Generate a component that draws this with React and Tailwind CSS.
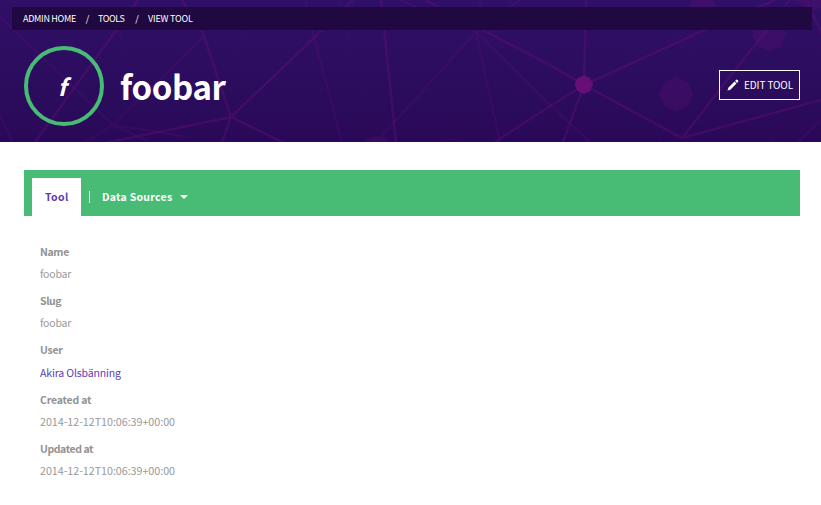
import React from "react";

const strong = [
  "M138 0 35 142", "M182 0 203 33 231 117 222 142", "M353 0 321 31 231 117 105 143", "M231 117 284 143",
  "M381 0 396 142", "M425 0 550 65 584 85 682 138 821 100", "M586 0 584 85 563 142", "M775 0 700 32 584 85",
  "M584 85 550 106 495 142", "M682 138 790 0", "M808 4 822 34",
];
const faint = [
  "M0 17 113 125 203 37", "M150 142 113 125 85 142", "M113 125 190 137", "M0 114 12 142", "M305 0 314 37 342 142",
  "M476 32 380 138", "M476 32 500 142", "M476 32 550 105 590 142", "M480 0 476 32 520 0", "M400 0 476 32",
  "M821 120 798 142",
];
const dim = [
  "M250 20 222 80", "M120 30 126 80", "M338 0 373 135", "M380 142 550 82 700 30", "M821 52 770 142", "M697 30 685 80",
  "M670 110 660 142", "M683 110 688 142", "M440 142 550 118 660 100", "M476 32 540 28",
];

function Network() {
  return (
    <svg className="absolute inset-0 h-[142px] w-full" viewBox="0 0 821 142" preserveAspectRatio="none" fill="none">
      <g stroke="#70107a" strokeWidth="2.6">
        <path opacity=".06" d={dim.join("")} />
        <path opacity=".17" d={faint.join("")} />
        <path opacity=".31" d={strong.join("")} />
      </g>
      <g fill="#70107a">
        <path opacity=".85" d="M584 75.5 590 78 593 84.5 590.5 91 584 94 577.5 91 574.5 84.5 577.5 78z" />
        <g opacity=".22">
          <path d="M676 77 688 82 693 94 688 106 676 111 664 106 659 94 664 82z" />
          <path d="M769 17 781 22 786 34 781 46 769 51 757 46 752 34 757 22z" />
          <path d="M703-7 713-2 717 7H689L693-2z" />
          <path d="M794 0h27v8l-8 2-8-2z" />
          <path d="M366 142 368 138 377 136 386 138 388 142z" />
        </g>
      </g>
    </svg>
  );
}

const fields = [
  ["Name", "foobar", "tracking-[-0.35px]", "tracking-[-0.2px]"],
  ["Slug", "foobar", "tracking-[-0.4px]", "tracking-[-0.2px]"],
  ["User", "Akira Olsbänning", "tracking-[-0.25px]", "tracking-[-0.14px]"],
  ["Created at", "2014-12-12T10:06:39+00:00", "tracking-[-0.2px]", "tracking-[-0.05px]"],
  ["Updated at", "2014-12-12T10:06:39+00:00", "tracking-[-0.42px]", "tracking-[-0.05px]"],
];

export default function App() {
  return (
    <div className="h-[505px] w-full overflow-hidden bg-white font-['Noto_Sans_CJK_SC',sans-serif]">
      <header className="relative h-[142px] bg-linear-to-b from-[#301067] to-[#290957] pt-[7px] text-white">
        <Network />
        <nav className="relative ml-3 flex h-[23px] w-[800px] items-center bg-[#200840] pl-[11px] text-[9px] leading-[23px] whitespace-nowrap">
          <span className="w-[53px] tracking-[-0.3px]">ADMIN HOME</span>
          <span className="w-[22px] pl-px text-center">/</span>
          <span className="w-[28px] tracking-[-0.4px]">TOOLS</span>
          <span className="w-[22px] text-center">/</span>
          <span className="tracking-[-0.2px]">VIEW TOOL</span>
        </nav>
        <div className="relative mt-4 flex h-20 items-center pr-[21px] pl-6">
          <div className="flex size-20 items-center justify-center rounded-full border-4 border-[#48bb74] pr-[4px] text-[23px] leading-none font-bold italic">
            <span>f</span>
          </div>
          <h1 className="ml-4 text-[33px] leading-[40px] font-bold tracking-[-0.4px]">foobar</h1>
          <button className="mt-[-2px] ml-auto flex h-[30px] w-[81px] items-center border border-white pl-[7px] text-[10px] leading-[28px] tracking-[-0.1px] whitespace-nowrap">
            <svg className="mr-[5px] size-3 shrink-0" viewBox="0 0 12 12" fill="white">
              <path d="M.5 11.5 1.3 8.7 7.5 2.5 9.5 4.5 3.3 10.7zM8.1 1.9 9.2.8q.6-.5 1.2.1l.7.7q.5.6 0 1.2L10.1 3.9z" />
            </svg>
            EDIT TOOL
          </button>
        </div>
      </header>
      <main className="pt-7 pr-[21px] pl-6">
        <div className="flex h-[46px] bg-[#48bb74] pt-2 pl-2 text-[10.5px] leading-[37px] font-bold whitespace-nowrap text-white">
          <div className="w-[49px] bg-white pl-[13px] tracking-[0.4px] text-[#5c3cb5]">Tool</div>
          <div className="mt-[13px] ml-2 h-3 w-px bg-white" />
          <div className="ml-3 w-[71px] tracking-[0.28px]">Data Sources</div>
          <div className="mt-[17px] ml-[7px] h-0 border-x-[4.5px] border-t-4 border-x-transparent border-t-white" />
        </div>
        <dl className="pt-[25px] pl-4 text-[10.5px] leading-[22px] text-[#999]">
          {fields.map(([label, value, labelSpacing, valueSpacing]) => (
            <div key={label} className="mb-[5.2px]">
              <dt className={`font-bold text-[#929292] ${labelSpacing}`}>{label}</dt>
              <dd className={`${valueSpacing} ${label === "User" ? "relative top-px text-[#5c3cb5]" : ""} ${value.startsWith("2014") ? "text-[10.75px]" : ""}`}>{value}</dd>
            </div>
          ))}
        </dl>
      </main>
    </div>
  );
}
